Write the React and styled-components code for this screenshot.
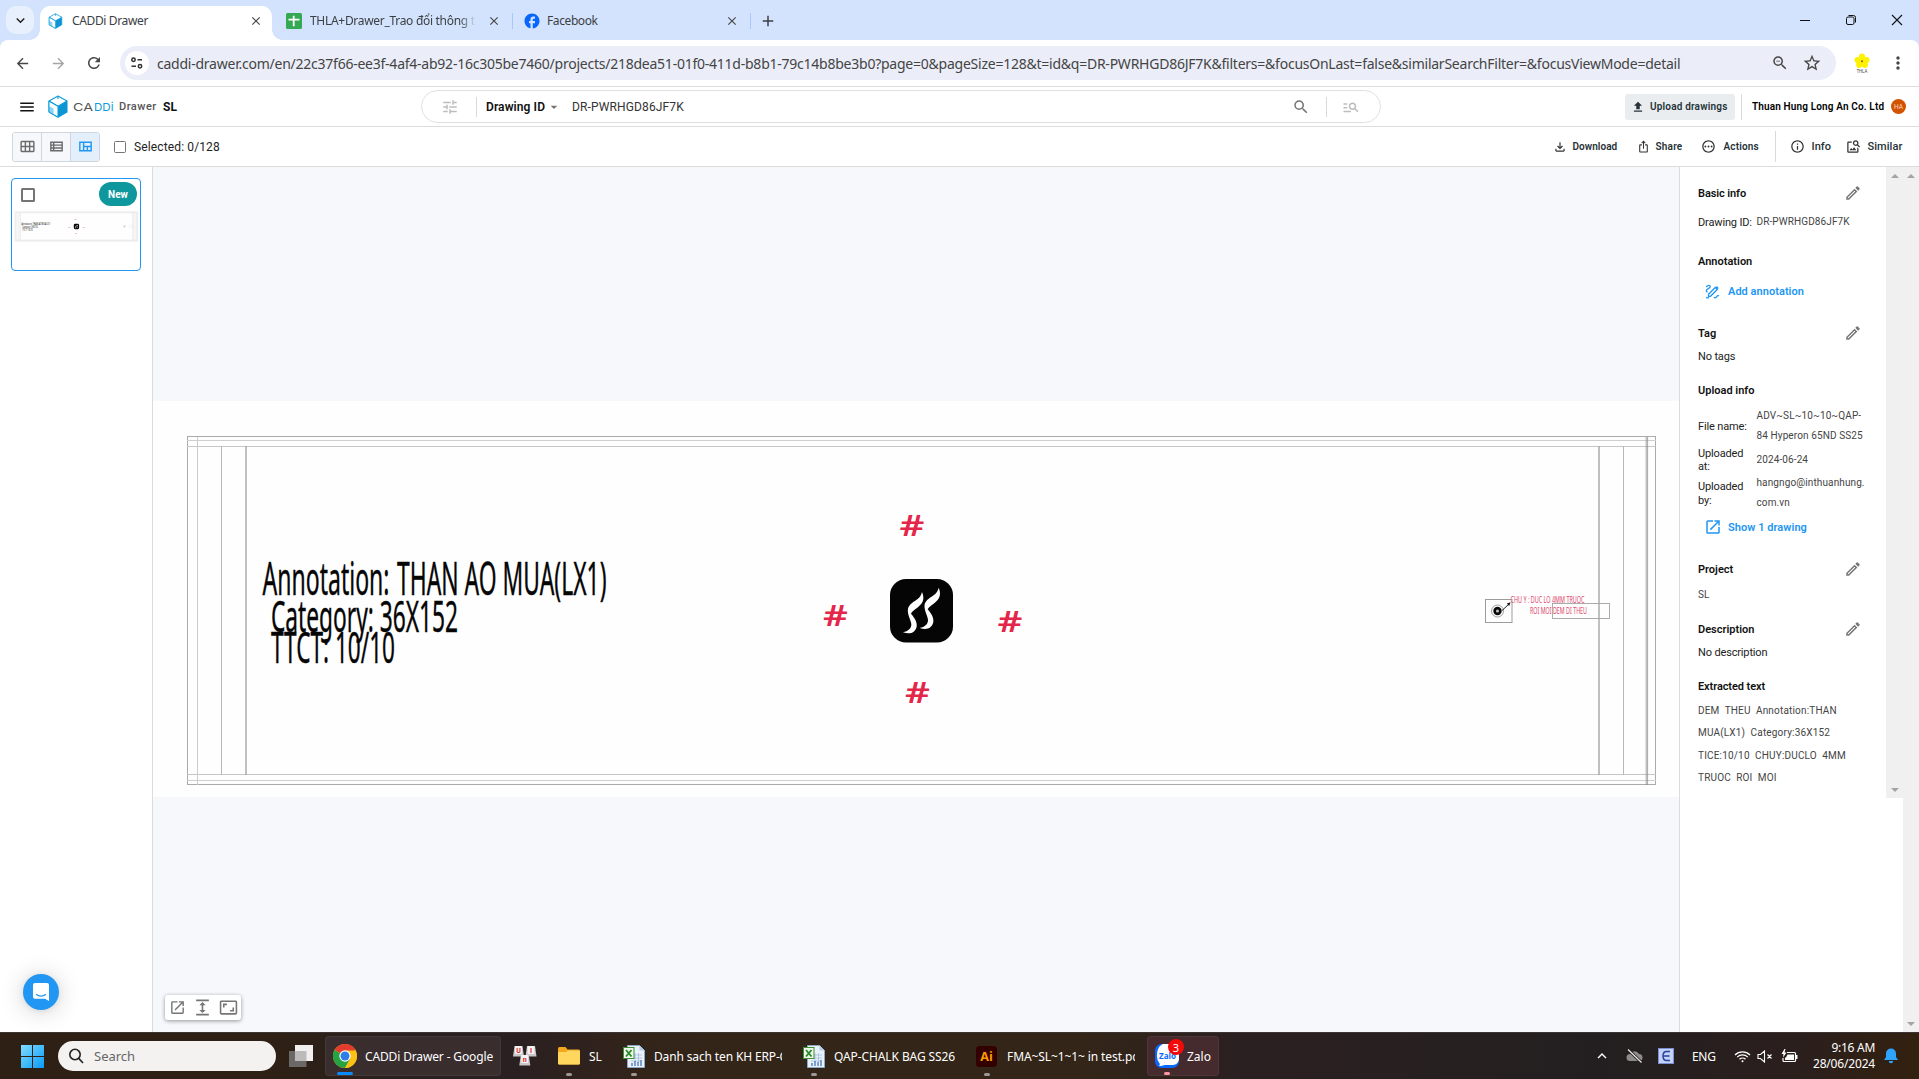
import React from "react";
import styled, { createGlobalStyle } from "styled-components";
import {
  MdMenu, MdTune, MdSearch, MdManageSearch, MdUpload, MdCalendarViewMonth, MdOutlineViewList,
  MdOutlineViewQuilt, MdOutlineFileDownload, MdIosShare, MdOutlinePending, MdInfoOutline,
  MdOutlineImageSearch, MdOutlineEdit, MdOpenInNew, MdOutlineAspectRatio, MdExpand, MdZoomOut,
  MdStarBorder, MdMoreVert, MdArrowBack, MdArrowForward, MdRefresh, MdClose, MdAdd,
  MdKeyboardArrowDown, MdArrowDropDown, MdFacebook, MdKeyboardArrowUp,
} from "react-icons/md";

const ui = `"Noto Sans", "Open Sans", sans-serif`;
const app = `Roboto, "Liberation Sans", sans-serif`;

const Global = createGlobalStyle`
  * { box-sizing: border-box; }
  body { margin: 0; background: #fff; overflow: hidden; }
  svg { display: block; flex: none; }
`;

const Screen = styled.div`
  width: 1919px; height: 1079px; display: flex; flex-direction: column; overflow: hidden;
  background: #fff; font-family: ${app}; color: #111;
`;

const Label = styled.span`
  flex: none; white-space: pre; display: block; overflow: ${(p) => (p.$clip ? "hidden" : "visible")};
  width: ${(p) => (p.$w ? p.$w + "px" : "auto")};
  margin-left: ${(p) => p.$ml || 0}px;
  letter-spacing: ${(p) => p.$ls || 0}px;
  font-size: ${(p) => p.$fs || 12}px;
  font-weight: ${(p) => p.$fw || 400};
  color: ${(p) => p.$c || "inherit"};
`;
const Spot = styled.span`
  flex: none; display: flex; align-items: center; justify-content: center;
  width: ${(p) => p.$w || 20}px; margin-left: ${(p) => p.$ml || 0}px; color: ${(p) => p.$c || "#474747"};
`;
const Rule = styled.span`
  flex: none; width: 1px; height: ${(p) => p.$h}px; margin-left: ${(p) => p.$ml || 0}px;
  background: ${(p) => p.$c || "#dadada"};
`;

/* ---------- browser chrome ---------- */
const TabStrip = styled.div`
  height: 40px; flex: none; display: flex; background: #d3e3fd; font-family: ${ui}; color: #3c4043;
`;
const TabSearch = styled.div`
  width: 28px; height: 28px; margin: 6px 0 0 6px; border-radius: 10px; background: #e9f0fd;
  display: flex; align-items: center; justify-content: center; color: #1f1f1f; flex: none;
`;
const Tab = styled.div`
  flex: none; width: ${(p) => p.$w}px; height: 34px; margin: 6px 0 0 ${(p) => p.$ml || 0}px;
  padding-left: ${(p) => p.$pl || 8}px; padding-bottom: 5px;
  border-radius: 10px 10px 0 0; background: ${(p) => (p.$on ? "#fff" : "transparent")};
  display: flex; align-items: center; position: relative;
  &::before, &::after {
    content: ""; display: ${(p) => (p.$on ? "block" : "none")}; position: absolute; bottom: 0; width: 10px; height: 10px;
  }
  &::before { left: -10px; background: radial-gradient(circle at 0 0, transparent 9.5px, #fff 10px); }
  &::after { right: -10px; background: radial-gradient(circle at 100% 0, transparent 9.5px, #fff 10px); }
`;
const FadeLabel = styled(Label)`
  overflow: hidden; mask-image: linear-gradient(90deg, #000 90%, transparent);
`;
const WindowControls = styled.div`
  margin-left: auto; width: 137px; height: 40px; display: flex; align-items: center; gap: 32px; padding-left: 16px;
`;
const AddressShell = styled.div`background: #d3e3fd; flex: none;`;
const AddressRow = styled.div`
  height: 46px; display: flex; align-items: center; background: #fff; font-family: ${ui};
  border-radius: 8px 8px 0 0;
`;
const UrlBar = styled.div`
  width: 1716px; height: 34px; margin-left: 16px; border-radius: 17px; background: #ebeef8;
  display: flex; align-items: center; padding-left: 5px; flex: none;
`;
const SiteInfo = styled.span`
  width: 24px; height: 24px; border-radius: 50%; background: #fff; display: flex; align-items: center; justify-content: center;
`;

/* ---------- app header ---------- */
const AppHeader = styled.div`
  height: 41px; flex: none; display: flex; align-items: center; border-top: 1px solid #dadce0; border-bottom: 1px solid #dcdcdc;
`;
const SearchBox = styled.div`
  width: 960px; height: 33px; margin-left: 244px; border: 1px solid #e0e0e0; border-radius: 17px;
  display: flex; align-items: center; flex: none;
`;
const UploadButton = styled.div`
  width: 110px; height: 26px; margin-left: 244px; border-radius: 3px; background: #e9edf0; color: #263238;
  display: flex; align-items: center; flex: none;
`;
const Avatar = styled.span`
  width: 15px; height: 15px; border-radius: 50%; margin-left: 7px; background: #d35400; color: #f7d9c4;
  font-size: 6.5px; display: flex; align-items: center; justify-content: center;
`;
const ToolRow = styled.div`
  height: 40px; flex: none; display: flex; align-items: center; border-bottom: 1px solid #dcdcdc; color: #263238;
`;
const ViewSwitch = styled.div`
  width: 88px; height: 30px; margin-left: 12px; border: 1px solid #cfd6dd; border-radius: 3px; display: flex; flex: none; overflow: hidden;
`;
const ViewButton = styled.div`
  flex: 1; display: flex; align-items: center; justify-content: center;
  background: ${(p) => (p.$on ? "#e3f0fb" : "#f6f8fb")}; color: ${(p) => (p.$on ? "#2196f3" : "#6b6b6b")};
  & + & { border-left: 1px solid #cfd6dd; }
`;
const Box = styled.span`
  width: ${(p) => p.$s}px; height: ${(p) => p.$s}px; border: ${(p) => p.$b || 1.5}px solid #757575; border-radius: 1.5px; flex: none;
  margin-left: ${(p) => p.$ml || 0}px;
`;

/* ---------- work area ---------- */
const Body = styled.div`flex: 1; min-height: 0; display: flex; position: relative;`;
const Sidebar = styled.div`
  width: 153px; border-right: 1px solid #dcdcdc; padding: 11px 0 0 11px; flex: none; background: #fff;
`;
const Card = styled.div`
  width: 130px; height: 93px; border: 1px solid #2196f3; border-radius: 4px; background: #fff;
  display: flex; flex-direction: column;
`;
const CardTop = styled.div`height: 30px; display: flex; padding: 3px 3px 0 9px; justify-content: space-between;`;
const CardCheck = styled(Box)`margin-top: 6px;`;
const NewBadge = styled.span`
  width: 38px; height: 24px; border-radius: 12px; background: #0e979d; color: #fff; font-size: 10px; font-weight: 700;
  display: flex; align-items: center; justify-content: center;
`;
const Canvas = styled.div`width: 1526px; flex: none; background: #f7f8fc; padding-top: 234px; position: relative;`;
const FloatTools = styled.div`
  position: absolute; left: 12px; top: 828px; width: 76px; height: 25px; background: #fff; border-radius: 3px;
  box-shadow: 0 1px 4px rgba(0,0,0,.4); display: flex; align-items: center; justify-content: space-between; color: #757575;
  padding: 0 3.5px 1px;
`;
const Messenger = styled.div`
  position: absolute; left: 23px; top: 807px; width: 36px; height: 36px; border-radius: 50%; background: #2196f3;
  display: flex; align-items: center; justify-content: center; box-shadow: 0 1px 6px rgba(0,0,0,.08), 0 2px 24px rgba(0,0,0,.18);
`;
const InfoColumn = styled.div`flex: none; border-left: 1px solid #dcdcdc; background: #fff; display: flex;`;
const InfoPanel = styled.div`
  width: 206px; height: 631px; flex: none; padding: 14px 0 0 18px; overflow: hidden;
`;
const Line = styled.div`
  height: ${(p) => p.$h || 24}px; margin-top: ${(p) => p.$mt || 0}px; display: flex; align-items: center;
`;
const Heading = styled(Label)`font-size: 11px; font-weight: 600; color: #111; width: 146px;`;
const FieldName = styled.span`
  width: 58.5px; flex: none; font-size: 11px; line-height: 13.5px; color: #222; white-space: pre; padding-top: 1.5px;
  letter-spacing: -0.15px;
`;
const FieldValue = styled.span`
  flex: none; font-size: 10px; line-height: 20px; color: #444; white-space: pre; letter-spacing: 0.11px;
`;
const Extracted = styled.div`
  margin-top: 2px; font-size: 10px; line-height: 22.3px; color: #444; white-space: pre; letter-spacing: 0.18px;
`;
const ScrollTrack = styled.div`
  width: ${(p) => p.$w}px; height: ${(p) => p.$h}px; background: #f0f0f0; flex: none;
  display: flex; flex-direction: column; justify-content: space-between; align-items: center; padding: 7px 0 6px;
`;
const Tri = styled.span`
  border: 4px solid transparent; width: 0; height: 0;
  ${(p) => (p.$up ? "border-top: 0; border-bottom: 4px solid #a3a3a3;" : "border-bottom: 0; border-top: 4px solid #a3a3a3;")}
`;

/* ---------- taskbar ---------- */
const Taskbar = styled.div`
  height: 47px; flex: none; display: flex; align-items: center; font-family: ${ui}; color: #fff; border-top: 1px solid #3c3533;
  background: linear-gradient(90deg, #2e2014 0, #2e2014 270px, #2b2021 420px, #2b2021 520px, #33241a 640px, #332517 760px, #332517 1080px, #2b2021 1240px, #231f20 1600px, #2b1f1d 1800px, #33210f 1919px);
`;
const StartSearch = styled.div`
  width: 218px; height: 30px; margin-left: 14px; border-radius: 15px; background: #f3f2f1; display: flex; align-items: center; flex: none;
`;
const TaskButton = styled.div`
  width: ${(p) => p.$w}px; height: 40px; margin-left: ${(p) => p.$ml || 0}px; border-radius: 4px; flex: none; position: relative;
  background: ${(p) => p.$bg || "transparent"}; display: flex; align-items: center; padding-left: ${(p) => p.$pl || 0}px;
  border: ${(p) => (p.$bg ? "1px solid rgba(255,255,255,.06)" : "0")};
`;
const Mark = styled.span`
  position: absolute; bottom: 0; left: ${(p) => p.$x}px; width: ${(p) => p.$w || 6}px; height: 3px; border-radius: 2px; background: ${(p) => p.$c || "#9d9894"};
`;
const Count = styled.span`
  position: absolute; left: 20px; top: 2px; width: 16px; height: 16px; border-radius: 50%; background: #f50a0a; font-size: 11px;
  display: flex; align-items: center; justify-content: center;
`;
const Clock = styled.div`width: 72px; margin-left: 5px; display: flex; flex-direction: column; align-items: flex-end; line-height: 16px; flex: none;`;

/* ---------- drawings ---------- */
const Cube = ({ s = 20, h = 23 }) => (
  <svg width={s} height={h} viewBox="0 0 20 23">
    <path d="M10 1 19 6v11l-9 5.200L1 17V6z" fill="#fff" stroke="#0d9ddb" strokeWidth="1.100" strokeLinejoin="round" />
    <path d="M10 11.200 19 6v11l-9 5.200z" fill="#0d94d2" />
    <path d="M1 6l9 5.200V22L1 17z" fill="#fff" stroke="#0d9ddb" strokeWidth="1" />
    <path d="M1 11l4.500 2.500V19.500L1 17z" fill="#2bb0e6" opacity=".55" />
    <path d="M1 6l9 5.200L19 6M10 1v3" fill="none" stroke="#0d9ddb" strokeWidth="1.100" />
  </svg>
);

const SheetsIcon = () => (
  <svg width="16" height="16" viewBox="0 0 16 16">
    <rect width="16" height="16" rx="1.500" fill="#34a853" />
    <path d="M7.700 2.800v10.400M2.500 6.700h11" stroke="#fff" strokeWidth="1.800" />
  </svg>
);

const Flower = () => (
  <svg width="16" height="21" viewBox="0 0 16 21">
    <g fill="#fff200">
      <circle cx="8" cy="3.600" r="3.100" /><circle cx="3.600" cy="7" r="3.100" /><circle cx="12.400" cy="7" r="3.100" />
      <circle cx="5.200" cy="11.800" r="3.100" /><circle cx="10.800" cy="11.800" r="3.100" /><circle cx="8" cy="8" r="3" />
    </g>
    <circle cx="8" cy="8.300" r="1" fill="#8a5a1c" />
    <text x="2.400" y="20" fontSize="4.600" fill="#555" fontFamily="Roboto" textLength="11">THLA</text>
  </svg>
);

const Flame = "M366 306C373 322 371 336 360 346C350 356 336 364 333 371C344 384 352 396 350 410C345 429 330 434 309 427C325 424 335 414 334 402C332 388 321 372 324 356C328 342 344 334 352 328C360 322 364 314 366 306Z";

const hashes = [[900, 536], [823.5, 626], [998, 631.5], [905.5, 702.5]];

function Artwork({ width, height, thumb }) {
  const ve = thumb ? "non-scaling-stroke" : undefined;
  const g = (d, c, w = 1) => <path d={d} stroke={thumb ? "#ececec" : c} strokeWidth={w} fill="none" vectorEffect={ve} />;
  return (
    <svg width={width} height={height} viewBox="153 401 1526 396" fontFamily={ui}>
      <rect x="153" y="401" width="1526" height="396" fill="#fefefe" />
      {g("M187 436.500H1656M187 784.500H1656M187.500 436V785M1655.500 436V785", "#ababab")}
      {g("M187 440.500H1656M187 780.500H1656", "#cfcfcf")}
      {g("M187 446.500H1656M187 774.500H1656", "#c6c6c6")}
      {g("M197.500 437V785", "#cccccc")}
      {g("M221.500 446V775M1623.500 446V775", "#b8b8b8")}
      {g("M246 446V775M1599 446V775", "#a6a6a6", 1.4)}
      {g("M1646.200 437V785M1647.600 437V785", "#8f8f8f", 0.8)}
      <g fill="#060606" stroke="#060606" strokeWidth={thumb ? 0 : 0.4}>
        <text x="262.500" y="594.500" fontSize="46" textLength="127" lengthAdjust="spacingAndGlyphs">Annotation:</text>
        <text x="397" y="594.500" fontSize="46" textLength="209.500" lengthAdjust="spacingAndGlyphs">THAN AO MUA(LX1)</text>
        <text x="271" y="631.500" fontSize="44.500" textLength="187" lengthAdjust="spacingAndGlyphs">Category: 36X152</text>
        <text x="271" y="663" fontSize="44.500" textLength="124" lengthAdjust="spacingAndGlyphs">TTCT: 10/10</text>
      </g>
      <g fill="#e3274b" fontWeight="600" fontSize="28.700">
        {hashes.map(([x, y]) => (
          <text key={x} x={x - 0.5} y={y} textLength="25" lengthAdjust="spacingAndGlyphs">#</text>
        ))}
      </g>
      <rect x="890" y="579" width="63" height="63.500" rx="16" fill="#050505" />
      <g transform="translate(800 490) scale(.3333)" fill="#fff">
        <path d={Flame} /><path d={Flame} transform="translate(50 -13)" />
      </g>
      <rect x="1485.500" y="599.500" width="26.500" height="23" fill="none" stroke="#9c9c9c" />
      <circle cx="1497.500" cy="611" r="6" fill="none" stroke="#777" strokeWidth=".7" />
      <circle cx="1497.500" cy="611" r="2.900" fill="#bbb" stroke="#0a0a0a" strokeWidth="2.600" />
      <path d="M1502 610.500L1509 604" stroke="#222" strokeWidth="1" />
      <path d="M1510.500 602.300l-3.600 1.200 2.200 2.600z" fill="#111" />
      <rect x="1552.500" y="603.500" width="57" height="15" fill="none" stroke="#a3a3a3" strokeWidth=".9" />
      <g fill="#e0456a" fontSize="8">
        <text x="1510.500" y="603.300" textLength="74" lengthAdjust="spacingAndGlyphs">CHU Y : DUC LO 4MM TRUOC</text>
        <text x="1530" y="613.500" textLength="57" lengthAdjust="spacingAndGlyphs">ROI MOI DEM DI THEU</text>
      </g>
    </svg>
  );
}

const AnnotateIcon = () => (
  <svg width="15" height="15" viewBox="0 0 15 15" fill="none" stroke="#2196f3" strokeWidth="1.300">
    <path d="M1.300 3C3 .8 5.200 1 5.200 2.800 5.200 4.600 1.300 4.700 1.300 6.700c0 .9.700 1.200 1.400 1.200M8.800 13.500c1.600.6 2.600-.2 3.200-1.200.5-.9 1.500-.9 2-.3" />
    <path d="M3.500 10.300 10.300 3.500l2 2-6.800 6.800H3.500z M11.300 2.500l2 2" />
    <path d="M1 13.800h3" />
  </svg>
);

const WindowsLogo = () => (
  <svg width="23" height="23" viewBox="0 0 23 23">
    <defs><linearGradient id="win" x1="0" y1="0" x2="1" y2="1"><stop offset="0" stopColor="#7fdcff" /><stop offset="1" stopColor="#0a9af8" /></linearGradient></defs>
    <path d="M0 0h11v11H0zM12 0h11v11H12zM0 12h11v11H0zM12 12h11v11H12z" fill="url(#win)" />
  </svg>
);

const ChromeLogo = () => (
  <svg width="24" height="24" viewBox="0 0 24 24">
    <circle cx="12" cy="12" r="12" fill="#fbc116" />
    <path d="M12 12 1.600 6A12 12 0 0 1 22.400 6z" fill="#e33b2e" />
    <path d="M1.600 6A12 12 0 0 0 12 24l5.200-9L12 12z" fill="#27a243" />
    <path d="M12 6.500h10.700A12 12 0 0 1 12 24l5-9z" fill="#fbc116" />
    <circle cx="12" cy="12" r="5.700" fill="#fff" /><circle cx="12" cy="12" r="4.500" fill="#2f7de9" />
  </svg>
);

const TaskView = () => (
  <svg width="24" height="23" viewBox="0 0 24 23">
    <rect x="0" y="6" width="17.500" height="16" fill="#6b6867" />
    <rect x="6" y="0" width="18" height="16" fill="#f1f0ef" />
    <rect x="6" y="6" width="11.500" height="10" fill="#bdbbba" />
  </svg>
);

const Keys = () => (
  <svg width="24" height="20" viewBox="0 0 24 20" fontFamily="Roboto" fontWeight="700" fontSize="7" textAnchor="middle">
    {[[0, 0, "U"], [12.5, 0, "I"], [6.3, 9, "n"]].map(([x, y, t]) => (
      <g key={t}>
        <path d={`M${x + 1.5} ${y}h8l1.500 10.500h-11z`} fill="#c9c7c7" />
        <rect x={x + 2} y={y} width="7" height="8" rx="1" fill="#f4f2f2" />
        <text x={x + 5.5} y={y + 6.5} fill="#e3262e">{t}</text>
      </g>
    ))}
  </svg>
);

const Folder = () => (
  <svg width="22" height="18" viewBox="0 0 22 18">
    <path d="M0 1.500Q0 0 1.500 0h6l2 2.500H20.500Q22 2.500 22 4v12q0 1.500-1.500 1.500h-19Q0 17.500 0 16z" fill="#f2a81d" />
    <path d="M0 6q0-1 1-1h7l2-1.500h11q1 0 1 1V16q0 1.500-1.500 1.500h-19Q0 17.500 0 16z" fill="#ffd75e" />
  </svg>
);

const ExcelDoc = () => (
  <svg width="22" height="23" viewBox="0 0 22 23">
    <path d="M4.500.5h12l5 5v17h-17z" fill="#e9f1fb" stroke="#8fb0d8" strokeWidth=".8" />
    <path d="M16.500.5v5h5z" fill="#b5cdea" />
    <path d="M8 10h11M8 13h11M8 16h11M12 8v10M15.500 8v10" stroke="#9db9dd" strokeWidth=".7" />
    <path d="M9 21v-3M12 21v-5M15 21v-4M18 21v-6" stroke="#5c86bf" strokeWidth="1.500" />
    <rect x=".5" y="2.500" width="10.500" height="11" fill="#eef7ea" stroke="#3f9136" />
    <path d="M3 5l5.500 6.500M8.500 5 3 11.500" stroke="#2b8a2b" strokeWidth="1.900" />
  </svg>
);

const Illustrator = () => (
  <svg width="21" height="21" viewBox="0 0 21 21">
    <rect width="21" height="21" rx="3.500" fill="#330000" />
    <text x="10.500" y="15" textAnchor="middle" fontFamily="Open Sans" fontWeight="700" fontSize="12.500" fill="#ff9a00">Ai</text>
  </svg>
);

const ZaloLogo = () => (
  <svg width="24" height="24" viewBox="0 0 24 24">
    <rect width="24" height="24" rx="6.500" fill="#0a68ff" />
    <path d="M8 0h9.500A6.500 6.500 0 0 1 24 6.500v8.500a6 6 0 0 1-6 6H9.500c-2 1-4 1.200-5.500.9C5 21 5 20 4.300 19 2.500 17 2 14 2 11 2 6 4 1.500 8 0z" fill="#fff" />
    <text x="12.500" y="15.300" textAnchor="middle" fontFamily="Open Sans" fontWeight="700" fontSize="8.500" fill="#0a68ff" textLength="17" lengthAdjust="spacingAndGlyphs">Zalo</text>
  </svg>
);

const Tray = {
  cloud: (
    <svg width="17" height="14" viewBox="0 0 17 14"><path d="M4 12a3.500 3.500 0 0 1 0-7A5 5 0 0 1 13 5a3.500 3.500 0 0 1 0 7z" fill="#8d8a8a" /><path d="M2 .5 15.500 13.500" stroke="#2a2222" strokeWidth="3" /><path d="M2 .5 15.500 13.500" stroke="#eee" strokeWidth="1.100" /></svg>
  ),
  key: (
    <svg width="16" height="16" viewBox="0 0 16 16"><rect width="16" height="16" fill="#7b8fd6" /><rect x="1" y="1" width="14" height="14" fill="#c3d2f5" /><path d="M12 3.500H8.500C6 3.500 5 5.500 5 8s1 4.500 3.500 4.500H12M5 8h6.500" stroke="#2f3f9e" strokeWidth="1.500" fill="none" /></svg>
  ),
  wifi: (
    <svg width="17" height="13" viewBox="0 0 17 13" fill="none" stroke="#fff" strokeWidth="1.200"><path d="M1 5a10.500 10.500 0 0 1 15 0M3.200 7.200a7.400 7.400 0 0 1 10.600 0M5.500 9.300a4.300 4.300 0 0 1 6 0" /><circle cx="8.500" cy="11.300" r="1" fill="#fff" stroke="none" /></svg>
  ),
  mute: (
    <svg width="16" height="13" viewBox="0 0 16 13" fill="none" stroke="#fff" strokeWidth="1.100"><path d="M1 4.500h2.500L7.500 1v11L3.500 8.500H1zM10.500 4.500l4 4M14.500 4.500l-4 4" /></svg>
  ),
  battery: (
    <svg width="17" height="14" viewBox="0 0 17 14"><path d="M6 3.500h7.500a1 1 0 0 1 1 1v7a1 1 0 0 1-1 1H3a1 1 0 0 1-1-1V9" fill="none" stroke="#fff" strokeWidth="1.200" /><path d="M6.500 5.500h6.500V11H4V8.500h1z" fill="#fff" /><path d="M15 6h1.500v4H15z" fill="#fff" /><path d="M3.500 0 .5 5H2.500L2 8.500 5.500 3.500H3.500L4.500 0z" fill="#fff" /></svg>
  ),
  bell: (
    <svg width="14" height="16" viewBox="0 0 14 16" fill="#2ea3ff"><path d="M7 .5a5 5 0 0 1 5 5V9l2 3H0l2-3V5.500a5 5 0 0 1 5-5zM4.800 13h4.400a2.200 2.200 0 0 1-4.400 0z" /></svg>
  ),
};

const Pencil = () => <Spot $w={18} $c="#757575"><MdOutlineEdit size={18} /></Spot>;

export default function App() {
  return (
    <Screen>
      <Global />
      <TabStrip>
        <TabSearch><MdKeyboardArrowDown size={17} /></TabSearch>
        <Tab $on $w={232} $ml={6}>
          <Cube s={15} h={16} />
          <Label $ml={9} $w={76} $ls={-0.36}>CADDi Drawer</Label>
          <Spot $w={16} $ml={100}><MdClose size={14} /></Spot>
        </Tab>
        <Tab $w={240} $pl={14}>
          <SheetsIcon />
          <FadeLabel $ml={8} $w={166} $ls={-0.3}>THLA+Drawer_Trao đổi thông ti</FadeLabel>
          <Spot $w={16} $ml={10}><MdClose size={14} /></Spot>
          <Rule $h={16} $ml={10} $c="#a8c7fa" />
        </Tab>
        <Tab $w={242} $pl={11}>
          <MdFacebook size={18} color="#0866ff" />
          <Label $ml={6} $w={52} $ls={-0.4}>Facebook</Label>
          <Spot $w={16} $ml={125}><MdClose size={14} /></Spot>
          <Rule $h={16} $ml={10} $c="#a8c7fa" />
        </Tab>
        <Tab $w={34} $pl={5}><MdAdd size={18} /></Tab>
        <WindowControls>
          <svg width="14" height="14" viewBox="0 0 14 14"><path d="M2 7.500h10" stroke="#111" /></svg>
          <svg width="14" height="14" viewBox="0 0 14 14" fill="none" stroke="#111"><rect x="2.500" y="4" width="7.500" height="7.500" rx="1.500" /><path d="M4.500 2.500h5a2 2 0 0 1 2 2v5" /></svg>
          <svg width="14" height="14" viewBox="0 0 14 14"><path d="M2 2l10 10M12 2 2 12" stroke="#111" strokeWidth="1.100" /></svg>
        </WindowControls>
      </TabStrip>

      <AddressShell>
        <AddressRow>
          <Spot $w={20} $ml={12}><MdArrowBack size={17} /></Spot>
          <Spot $w={20} $ml={16} $c="#a5a5a5"><MdArrowForward size={17} /></Spot>
          <Spot $w={20} $ml={16}><MdRefresh size={18} /></Spot>
          <UrlBar>
            <SiteInfo>
              <svg width="14" height="12" viewBox="0 0 14 12" fill="none" stroke="#333" strokeWidth="1.500"><circle cx="3.500" cy="2.800" r="1.700" /><path d="M7.500 2.800H12M1.500 9.200H6" /><circle cx="10" cy="9.200" r="1.700" /></svg>
            </SiteInfo>
            <Label $ml={8} $w={1524} $fs={14} $ls={-0.24} $c="#444">caddi-drawer.com/en/22c37f66-ee3f-4af4-ab92-16c305be7460/projects/218dea51-01f0-411d-b8b1-79c14b8be3b0?page=0&pageSize=128&t=id&q=DR-PWRHGD86JF7K&filters=&focusOnLast=false&similarSearchFilter=&focusViewMode=detail</Label>
            <Spot $w={20} $ml={89}><MdZoomOut size={18} /></Spot>
            <Spot $w={20} $ml={12}><MdStarBorder size={20} /></Spot>
          </UrlBar>
          <Spot $w={20} $ml={16}><Flower /></Spot>
          <Spot $w={20} $ml={16}><MdMoreVert size={20} /></Spot>
        </AddressRow>
      </AddressShell>

      <AppHeader>
        <Spot $w={18} $ml={18} $c="#111"><MdMenu size={18} /></Spot>
        <Spot $w={20} $ml={12}><Cube /></Spot>
        <Spot $w={41} $ml={5}>
          <svg width="41" height="12" viewBox="0 0 41 12" fontFamily="Inter" fontSize="11">
            <text x="0" y="10" fill="#555" textLength="20" lengthAdjust="spacingAndGlyphs">CA</text>
            <text x="21" y="10" fill="#0d9ddb" textLength="19.500" lengthAdjust="spacingAndGlyphs">DDi</text>
          </svg>
        </Spot>
        <Label $ml={5} $w={38} $fs={11} $fw={500} $ls={0.5} $c="#555">Drawer</Label>
        <Label $ml={6} $w={14} $fs={12} $fw={700} $c="#111">SL</Label>
        <SearchBox>
          <Spot $w={20} $ml={18} $c="#bdbdbd"><MdTune size={18} /></Spot>
          <Rule $h={20} $ml={16} />
          <Label $ml={9} $w={60} $fs={12} $fw={600} $ls={0.09}>Drawing ID</Label>
          <Spot $w={16} $ml={0} $c="#757575"><MdArrowDropDown size={16} /></Spot>
          <Label $ml={10} $w={112} $fs={12} $ls={0.14} $c="#333">DR-PWRHGD86JF7K</Label>
          <Spot $w={20} $ml={607} $c="#757575"><MdSearch size={18} /></Spot>
          <Rule $h={20} $ml={15} />
          <Spot $w={20} $ml={14} $c="#bdbdbd"><MdManageSearch size={18} /></Spot>
        </SearchBox>
        <UploadButton>
          <Spot $w={16} $ml={5} $c="#263238"><MdUpload size={14} /></Spot>
          <Label $ml={4} $w={78} $fs={10} $fw={600} $ls={0.18}>Upload drawings</Label>
        </UploadButton>
        <Rule $h={26} $ml={6} />
        <Label $ml={10} $w={132} $fs={10} $fw={600} $ls={0.14} $c="#000">Thuan Hung Long An Co. Ltd</Label>
        <Avatar>HA</Avatar>
      </AppHeader>

      <ToolRow>
        <ViewSwitch>
          <ViewButton><MdCalendarViewMonth size={17} /></ViewButton>
          <ViewButton><MdOutlineViewList size={17} /></ViewButton>
          <ViewButton $on><MdOutlineViewQuilt size={17} /></ViewButton>
        </ViewSwitch>
        <Box $s={12} $ml={14} />
        <Label $ml={8} $w={86} $fs={12} $ls={0.13} $c="#222">Selected: 0/128</Label>
        <Spot $w={16} $ml={1331.5} $c="#333"><MdOutlineFileDownload size={14} /></Spot>
        <Label $ml={5} $w={45} $fs={10} $fw={600} $ls={0.05}>Download</Label>
        <Spot $w={16} $ml={18} $c="#333"><MdIosShare size={13} /></Spot>
        <Label $ml={4} $w={27} $fs={10} $fw={600} $ls={0.2}>Share</Label>
        <Spot $w={16} $ml={18} $c="#333"><MdOutlinePending size={15} /></Spot>
        <Label $ml={7} $w={35} $fs={10} $fw={600} $ls={0.17}>Actions</Label>
        <Rule $h={31} $ml={16} />
        <Spot $w={16} $ml={14} $c="#333"><MdInfoOutline size={15} /></Spot>
        <Label $ml={6} $w={20} $fs={11} $fw={500} $ls={0.05}>Info</Label>
        <Spot $w={16} $ml={14} $c="#333"><MdOutlineImageSearch size={15} /></Spot>
        <Label $ml={6} $w={35} $fs={11} $fw={500} $ls={0.06}>Similar</Label>
      </ToolRow>

      <Body>
        <Sidebar>
          <Card>
            <CardTop><CardCheck $s={14} $b={2} /><NewBadge>New</NewBadge></CardTop>
            <Artwork width={128} height={33} thumb />
          </Card>
          <Messenger>
            <svg width="16" height="18" viewBox="0 0 16 18"><path d="M2 0h12q2 0 2 2v16l-4-2.200H2q-2 0-2-2V2q0-2 2-2z" fill="#fff" /><path d="M3 11.300q5 3.600 10 0" stroke="#2196f3" fill="none" strokeWidth="1.200" /></svg>
          </Messenger>
        </Sidebar>
        <Canvas>
          <Artwork width={1526} height={396} />
          <FloatTools>
            <MdOpenInNew size={17} /><MdExpand size={19} /><MdOutlineAspectRatio size={19} />
          </FloatTools>
        </Canvas>
        <InfoColumn>
          <InfoPanel>
            <Line><Heading $ls={-0.1}>Basic info</Heading><Pencil /></Line>
            <Line $h={22} $mt={6}><FieldName>Drawing ID:</FieldName><FieldValue>DR-PWRHGD86JF7K</FieldValue></Line>
            <Line $mt={16}><Heading>Annotation</Heading></Line>
            <Line $mt={6}><Spot $w={16} $ml={6}><AnnotateIcon /></Spot><Label $ml={8} $fs={11} $fw={600} $ls={0.04} $c="#2196f3">Add annotation</Label></Line>
            <Line $mt={18}><Heading>Tag</Heading><Pencil /></Line>
            <Line $h={16} $mt={3}><FieldName>No tags</FieldName></Line>
            <Line $mt={14}><Heading>Upload info</Heading></Line>
            <Line $h={40} $mt={4}><FieldName>File name:</FieldName><FieldValue>{"ADV~SL~10~10~QAP-\n84 Hyperon 65ND SS25"}</FieldValue></Line>
            <Line $h={27}><FieldName>{"Uploaded\nat:"}</FieldName><FieldValue>2024-06-24</FieldValue></Line>
            <Line $h={40}><FieldName>{"Uploaded\nby:"}</FieldName><FieldValue>{"hangngo@inthuanhung.\ncom.vn"}</FieldValue></Line>
            <Line $mt={2}><Spot $w={18} $ml={6} $c="#2196f3"><MdOpenInNew size={18} /></Spot><Label $ml={6} $fs={11} $fw={600} $ls={0.05} $c="#2196f3">Show 1 drawing</Label></Line>
            <Line $mt={18}><Heading>Project</Heading><Pencil /></Line>
            <Line $h={16} $mt={6}><FieldValue>SL</FieldValue></Line>
            <Line $mt={14}><Heading>Description</Heading><Pencil /></Line>
            <Line $h={16} $mt={3}><FieldName>No description</FieldName></Line>
            <Line $mt={14}><Heading $ls={-0.09}>Extracted text</Heading></Line>
            <Extracted>{"DEM  THEU  Annotation:THAN\nMUA(LX1)  Category:36X152\nTICE:10/10  CHUY:DUCLO  4MM\nTRUOC  ROI  MOI"}</Extracted>
          </InfoPanel>
          <ScrollTrack $w={17} $h={631}><Tri $up /><Tri /></ScrollTrack>
        </InfoColumn>
        <ScrollTrack $w={16} $h={865}><Tri $up /><Tri /></ScrollTrack>
      </Body>

      <Taskbar>
        <Spot $w={23} $ml={21}><WindowsLogo /></Spot>
        <StartSearch>
          <Spot $w={16} $ml={10}>
            <svg width="16" height="16" viewBox="0 0 16 16" fill="none" stroke="#222" strokeWidth="1.600"><circle cx="7" cy="6.500" r="5.200" /><path d="M10.700 10.400 15 15" /></svg>
          </Spot>
          <Label $ml={10} $fs={13} $c="#666">Search</Label>
        </StartSearch>
        <Spot $w={24} $ml={13}><TaskView /></Spot>
        <TaskButton $ml={12} $w={176} $bg="#392d2e" $pl={7}><ChromeLogo /><Label $ml={8} $w={128} $ls={-0.14}>CADDi Drawer - Google</Label><Mark $x={11} $w={16} $c="#0a8bff" /></TaskButton>
        <Spot $w={24} $ml={12}><Keys /></Spot>
        <TaskButton $ml={21} $w={60}><Folder /><Label $ml={9}>SL</Label><Mark $x={8} /></TaskButton>
        <TaskButton $ml={5} $w={160}><ExcelDoc /><Label $clip $ml={9} $w={128} $ls={-0.14}>Danh sach ten KH ERP-C</Label><Mark $x={8} /></TaskButton>
        <TaskButton $ml={20} $w={160}><ExcelDoc /><Label $ml={9} $ls={-0.1}>QAP-CHALK BAG SS26</Label><Mark $x={8} /></TaskButton>
        <TaskButton $ml={13} $w={160}><Illustrator /><Label $clip $ml={10} $w={128} $ls={-0.1}>FMA~SL~1~1~ in test.pdf</Label><Mark $x={8} /></TaskButton>
        <TaskButton $ml={11} $w={72} $bg="#452a2e" $pl={7}><ZaloLogo /><Label $ml={8}>Zalo</Label><Count>3</Count><Mark $x={16} $c="#ff9aa2" /></TaskButton>
        <Spot $w={20} $ml={373} $c="#fff"><MdKeyboardArrowUp size={18} /></Spot>
        <Spot $w={18} $ml={13}>{Tray.cloud}</Spot>
        <Spot $w={16} $ml={15}>{Tray.key}</Spot>
        <Label $ml={18} $w={23} $ls={-0.3}>ENG</Label>
        <Spot $w={18} $ml={18}>{Tray.wifi}</Spot>
        <Spot $w={18} $ml={5}>{Tray.mute}</Spot>
        <Spot $w={18} $ml={6}>{Tray.battery}</Spot>
        <Clock><Label $ls={-0.28}>9:16 AM</Label><Label $ls={-0.18}>28/06/2024</Label></Clock>
        <Spot $w={16} $ml={8}>{Tray.bell}</Spot>
      </Taskbar>
    </Screen>
  );
}
